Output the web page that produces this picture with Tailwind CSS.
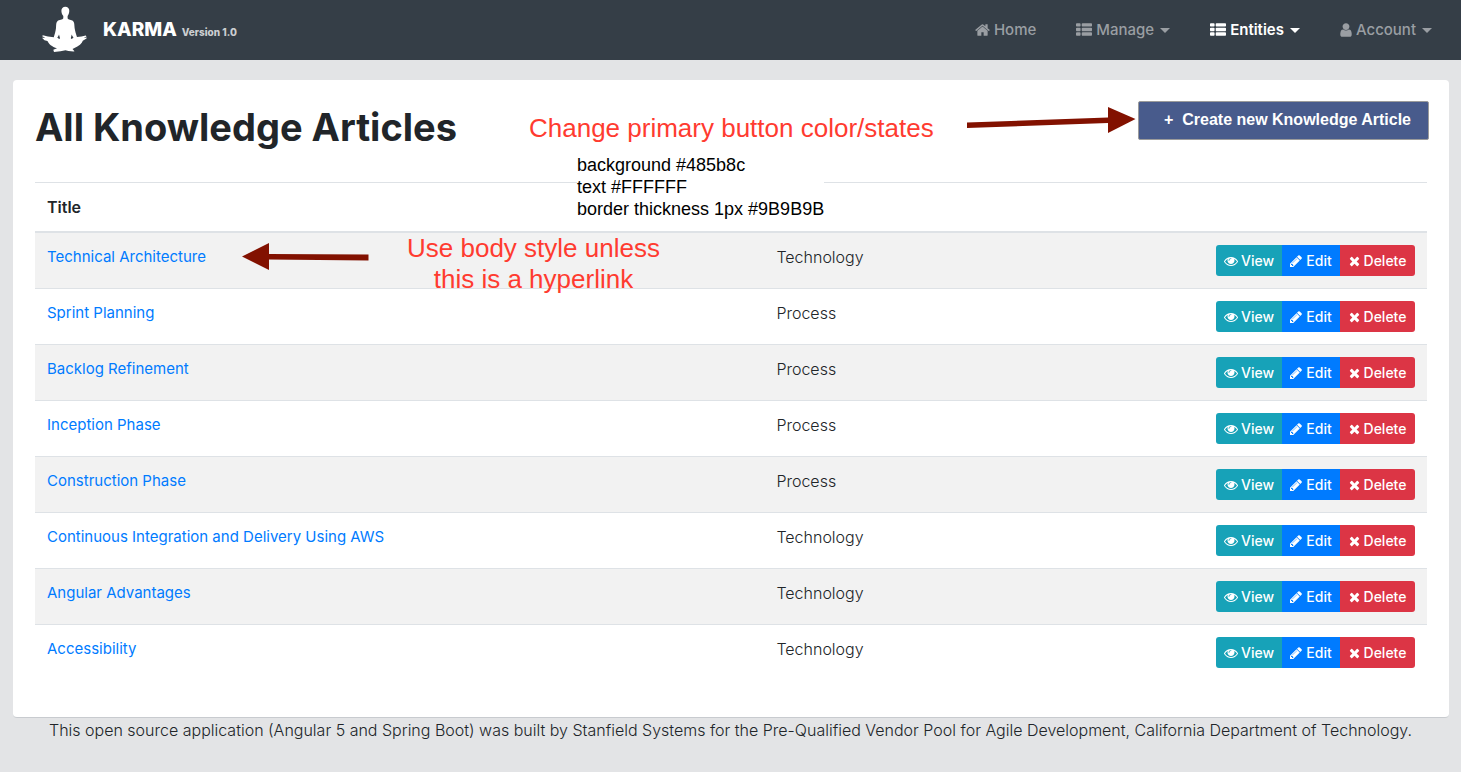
<!DOCTYPE html>
<html lang="en">
<head>
<meta charset="utf-8">
<meta name="viewport" content="width=device-width, initial-scale=1">
<title>Karma - Knowledge Articles</title>
<script src="https://cdn.jsdelivr.net/npm/@tailwindcss/browser@4"></script>
</head>
<body class="min-h-screen bg-[#e3e4e6] font-['Inter',sans-serif] text-base text-[#212529]">
<svg class="hidden" aria-hidden="true">
  <symbol id="home" viewBox="64 0 1664 1792"><path d="M1472 992v480q0 26-19 45t-45 19h-384v-384h-256v384h-384q-26 0-45-19t-19-45v-480q0-1 .5-3t.5-3l575-474 575 474q1 2 1 6zm223-69l-62 74q-8 9-21 11h-3q-13 0-21-7l-692-577-692 577q-12 8-24 7-13-2-21-11l-62-74q-8-10-7-23.5t11-21.5l719-599q32-26 76-26t76 26l244 204v-195q0-14 9-23t23-9h192q14 0 23 9t9 23v408l219 182q10 8 11 21.5t-7 23.5z"/></symbol>
  <symbol id="list" viewBox="0 0 1792 1792"><path d="M512 1248v192q0 40-28 68t-68 28h-320q-40 0-68-28t-28-68v-192q0-40 28-68t68-28h320q40 0 68 28t28 68zm0-512v192q0 40-28 68t-68 28h-320q-40 0-68-28t-28-68v-192q0-40 28-68t68-28h320q40 0 68 28t28 68zm1280 512v192q0 40-28 68t-68 28h-960q-40 0-68-28t-28-68v-192q0-40 28-68t68-28h960q40 0 68 28t28 68zm-1280-1024v192q0 40-28 68t-68 28h-320q-40 0-68-28t-28-68v-192q0-40 28-68t68-28h320q40 0 68 28t28 68zm1280 512v192q0 40-28 68t-68 28h-960q-40 0-68-28t-28-68v-192q0-40 28-68t68-28h960q40 0 68 28t28 68zm0-512v192q0 40-28 68t-68 28h-960q-40 0-68-28t-28-68v-192q0-40 28-68t68-28h960q40 0 68 28t28 68z"/></symbol>
  <symbol id="user" viewBox="256 0 1280 1792"><path d="M1536 1399q0 109-62.5 187t-150.5 78h-854q-88 0-150.5-78t-62.5-187q0-85 8.5-160.5t31.5-152 58.5-131 94-89 134.5-34.5q131 128 313 128t313-128q76 0 134.5 34.5t94 89 58.5 131 31.5 152 8.5 160.5zm-256-887q0 159-112.5 271.5t-271.5 112.5-271.5-112.5-112.5-271.5 112.5-271.5 271.5-112.5 271.5 112.5 112.5 271.5z"/></symbol>
  <symbol id="eye" viewBox="0 0 1792 1792"><path d="M1664 960q-152-236-381-353 61 104 61 225 0 185-131.5 316.5t-316.5 131.5-316.5-131.5-131.5-316.5q0-121 61-225-229 117-381 353 133 205 333.5 326.5t434.5 121.5 434.5-121.5 333.5-326.5zm-720-384q0-20-14-34t-34-14q-125 0-214.5 89.5t-89.5 214.5q0 20 14 34t34 14 34-14 14-34q0-86 61-147t147-61q20 0 34-14t14-34zm848 384q0 34-20 69-140 230-376.5 368.5t-499.5 138.5-499.5-139-376.5-368q-20-35-20-69t20-69q140-229 376.5-368t499.5-139 499.5 139 376.5 368q20 35 20 69z"/></symbol>
  <symbol id="pencil" viewBox="128 0 1536 1792"><path d="M491 1536l91-91-235-235-91 91v107h128v128h107zm523-928q0-22-22-22-10 0-17 7l-542 542q-7 7-7 17 0 22 22 22 10 0 17-7l542-542q7-7 7-17zm-54-192l416 416-832 832h-416v-416zm683 96q0 53-37 90l-166 166-416-416 166-165q36-38 90-38 53 0 91 38l235 234q37 39 37 91z"/></symbol>
  <symbol id="times" viewBox="192 0 1408 1792"><path d="M1490 1322q0 40-28 68l-136 136q-28 28-68 28t-68-28l-294-294-294 294q-28 28-68 28t-68-28l-136-136q-28-28-28-68t28-68l294-294-294-294q-28-28-28-68t28-68l136-136q28-28 68-28t68 28l294 294 294-294q28-28 68-28t68 28l136 136q28 28 28 68t-28 68l-294 294 294 294q28 28 28 68z"/></symbol>
</svg>

<header class="flex h-[60px] items-center justify-between bg-[#353e47] pr-[29px] pl-[41px]">
  <a href="#" class="flex items-center">
    <svg class="h-12 w-12 fill-white" viewBox="0 0 48 48" aria-hidden="true"><path fill-rule="evenodd" d="M24.300 .8C26.800 .8 28.400 2.600 28.300 5C28.200 7.200 27.400 9 26.600 10V12.300C27 13.800 30.500 14 32 15C33.500 16.200 33.300 19 33.600 22C34 25 35.200 28.500 36 31L40.500 30.600L44.800 29.500L45.500 30.500L42.700 31.900L45.800 31.600L45.500 32.600L41.800 34.800C41 37.500 38 40.300 33 42.300L31.500 43L33.500 45.300L32.500 45.500L27.500 44.900L24.500 44.200L19.500 45.300L13 46L12.300 43.800L16 42.300C11 40.800 7.500 37.800 6.500 35L3.500 34.300L1 31.800L4.300 31.700L1.200 30.200L1.800 29.200L7 30.600L12.800 31.200C13.600 28.500 14.700 25 15 22C15.200 19 15 16.200 16.600 15C18 14 21.800 13.800 22.300 12.300V10C21.300 9 20.500 7.200 20.400 5C20.300 2.600 21.900 .8 24.300 .8ZM18 28.500C17.500 30 17 30.800 16.300 31.800L18.300 33L19 32.200ZM30.700 28.500L29.800 32.200L30.500 33L32.500 31.800C31.900 30.800 31.200 30 30.700 28.500Z"/></svg>
    <span class="ml-[14px] text-[19px] font-extrabold text-white">KARMA</span>
    <span class="mt-1 ml-[5px] text-[10px] font-extrabold text-[#ccced1]">Version 1.0</span>
  </a>
  <nav class="flex items-center gap-10 text-[15px] font-medium text-[#9a9ea3]">
    <a href="#" class="flex items-center gap-1"><svg class="h-4 w-[15px] fill-current"><use href="#home"/></svg>Home</a>
    <button class="flex items-center gap-1"><svg class="h-4 w-4 fill-current"><use href="#list"/></svg>Manage<span class="ml-0.5 border-x-[5px] border-t-[5px] border-x-transparent border-t-current"></span></button>
    <button class="flex items-center gap-1 font-semibold text-white"><svg class="h-4 w-4 fill-current"><use href="#list"/></svg>Entities<span class="ml-0.5 border-x-[5px] border-t-[5px] border-x-transparent border-t-current"></span></button>
    <button class="flex items-center gap-1"><svg class="h-4 w-3 fill-current"><use href="#user"/></svg>Account<span class="ml-0.5 border-x-[5px] border-t-[5px] border-x-transparent border-t-current"></span></button>
  </nav>
</header>

<main class="relative mx-3 mt-5 ml-[13px] rounded border-b border-[#c8cbcf] bg-white px-[22px] pb-[37px]">
  <div class="-mr-0.5 flex items-start justify-between pt-[21px]">
    <h1 class="mt-0.5 text-[38px] leading-12 font-bold">All Knowledge Articles</h1>
    <button class="h-[39px] w-[291px] rounded-xs border border-[#9b9b9b] bg-[#485b8c] pb-0.5 pl-2 font-['Liberation_Sans',sans-serif] text-base font-bold whitespace-pre text-white">+  Create new Knowledge Article</button>
  </div>
  <table class="mt-[31px] w-full table-fixed border-separate border-spacing-0">
    <colgroup><col><col class="w-[30%]"><col class="w-[245px]"></colgroup>
    <thead>
      <tr>
        <th class="border-t border-b-2 border-[#dee2e6] p-3 text-left leading-6 font-semibold">Title</th>
        <th class="border-t border-b-2 border-[#dee2e6] p-3"></th>
        <th class="border-t border-b-2 border-[#dee2e6] p-3"></th>
      </tr>
    </thead>
    <tbody id="articles"></tbody>
  </table>

  <!-- Review notes -->
  <p class="absolute top-[33px] left-[516px] font-['Liberation_Sans',sans-serif] text-[26px] leading-[31px] whitespace-nowrap text-[#ff3b30]">Change primary button color/states</p>
  <p class="absolute top-[74px] left-[564px] bg-white font-['Liberation_Sans',sans-serif] text-lg leading-[22px] whitespace-nowrap text-black">background #485b8c<br>text #FFFFFF<br>border thickness 1px #9B9B9B</p>
  <p class="absolute top-[153px] left-[394px] text-center font-['Liberation_Sans',sans-serif] text-[26px] leading-[31px] whitespace-nowrap text-[#ff3b30]">Use body style unless<br>this is a hyperlink</p>
  <svg class="absolute top-[26px] left-[953px] h-7 w-[170px] fill-[#821100]" viewBox="0 0 170 28" aria-hidden="true"><path d="M1 16.500L142 11.500V1L169.500 13L142 27V17L1 22Z"/></svg>
  <svg class="absolute top-[162px] left-[228px] h-7 w-32 fill-[#821100]" viewBox="0 0 128 28" aria-hidden="true"><path d="M127.500 12.500L28 12V1L1 14.500L28 28V17.500L127.500 18.500Z"/></svg>
</main>
<footer class="text-center leading-6 font-light">This open source application (Angular 5 and Spring Boot) was built by Stanfield Systems for the Pre-Qualified Vendor Pool for Agile Development, California Department of Technology.</footer>

<template id="row">
  <tr class="group odd:bg-[#f2f2f2]">
    <td class="border-[#dee2e6] p-3 align-top text-[15px] leading-6 group-not-first:border-t"><a href="#" class="text-[#007bff]"></a></td>
    <td class="border-[#dee2e6] p-3 align-top leading-6 font-light group-not-first:border-t"></td>
    <td class="border-[#dee2e6] p-3 align-top group-not-first:border-t">
      <div class="flex justify-end text-sm font-medium text-white">
        <button class="flex h-[31px] w-[66px] items-center justify-center gap-[3px] rounded-l-[3px] bg-[#17a2b8]"><svg class="h-3.5 w-3.5 fill-current"><use href="#eye"/></svg>View</button>
        <button class="flex h-[31px] w-[58px] items-center justify-center gap-1 bg-[#007bff]"><svg class="h-3.5 w-3 fill-current"><use href="#pencil"/></svg>Edit</button>
        <button class="flex h-[31px] w-[75px] items-center justify-center gap-1 rounded-r-[3px] bg-[#dc3545]"><svg class="h-3.5 w-[11px] fill-current"><use href="#times"/></svg>Delete</button>
      </div>
    </td>
  </tr>
</template>
<script>
  const articles = [
    ["Technical Architecture", "Technology"],
    ["Sprint Planning", "Process"],
    ["Backlog Refinement", "Process"],
    ["Inception Phase", "Process"],
    ["Construction Phase", "Process"],
    ["Continuous Integration and Delivery Using AWS", "Technology"],
    ["Angular Advantages", "Technology"],
    ["Accessibility", "Technology"]
  ];
  const body = document.getElementById("articles");
  for (const [title, category] of articles) {
    const row = document.getElementById("row").content.cloneNode(true);
    row.querySelector("a").textContent = title;
    row.querySelectorAll("td")[1].textContent = category;
    body.append(row);
  }
</script>
</body>
</html>
